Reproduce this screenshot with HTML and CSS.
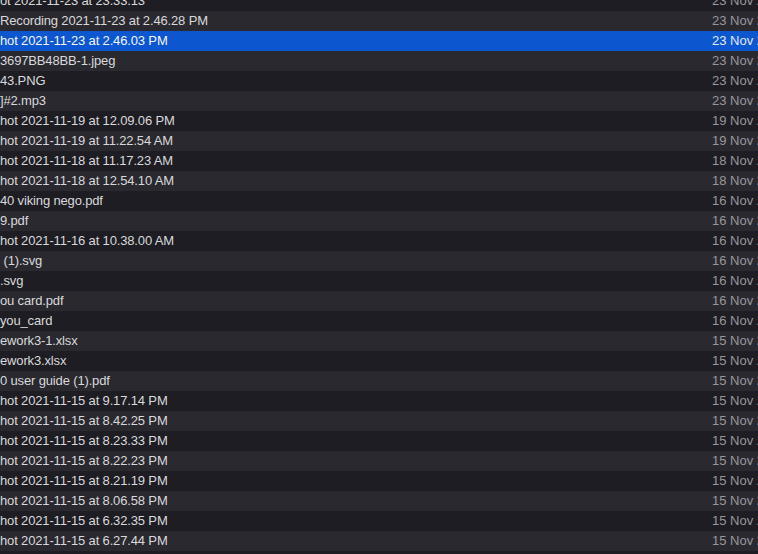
FILE: index.html
```html
<!DOCTYPE html>
<html>
<head>
<meta charset="utf-8">
<link rel="stylesheet" href="styles.css">
</head>
<body>
<div class="view">
  <ul class="list">
    <li class="row"><span class="name">ot 2021-11-23 at 23.33.13</span><span class="date">23 Nov 2021 at 23:33</span></li>
    <li class="row"><span class="name">Recording 2021-11-23 at 2.46.28 PM</span><span class="date">23 Nov 2021 at 14:46</span></li>
    <li class="row selected"><span class="name">hot 2021-11-23 at 2.46.03 PM</span><span class="date">23 Nov 2021 at 14:46</span></li>
    <li class="row"><span class="name">3697BB48BB-1.jpeg</span><span class="date">23 Nov 2021 at 14:20</span></li>
    <li class="row"><span class="name">43.PNG</span><span class="date">23 Nov 2021 at 13:12</span></li>
    <li class="row"><span class="name">]#2.mp3</span><span class="date">23 Nov 2021 at 10:05</span></li>
    <li class="row"><span class="name">hot 2021-11-19 at 12.09.06 PM</span><span class="date">19 Nov 2021 at 12:09</span></li>
    <li class="row"><span class="name">hot 2021-11-19 at 11.22.54 AM</span><span class="date">19 Nov 2021 at 11:22</span></li>
    <li class="row"><span class="name">hot 2021-11-18 at 11.17.23 AM</span><span class="date">18 Nov 2021 at 11:17</span></li>
    <li class="row"><span class="name">hot 2021-11-18 at 12.54.10 AM</span><span class="date">18 Nov 2021 at 00:54</span></li>
    <li class="row"><span class="name">40 viking nego.pdf</span><span class="date">16 Nov 2021 at 21:40</span></li>
    <li class="row"><span class="name">9.pdf</span><span class="date">16 Nov 2021 at 15:02</span></li>
    <li class="row"><span class="name">hot 2021-11-16 at 10.38.00 AM</span><span class="date">16 Nov 2021 at 10:38</span></li>
    <li class="row"><span class="name">&nbsp;(1).svg</span><span class="date">16 Nov 2021 at 10:12</span></li>
    <li class="row"><span class="name">.svg</span><span class="date">16 Nov 2021 at 10:11</span></li>
    <li class="row"><span class="name">ou card.pdf</span><span class="date">16 Nov 2021 at 09:50</span></li>
    <li class="row"><span class="name">you_card</span><span class="date">16 Nov 2021 at 09:48</span></li>
    <li class="row"><span class="name">ework3-1.xlsx</span><span class="date">15 Nov 2021 at 23:10</span></li>
    <li class="row"><span class="name">ework3.xlsx</span><span class="date">15 Nov 2021 at 23:02</span></li>
    <li class="row"><span class="name">0 user guide (1).pdf</span><span class="date">15 Nov 2021 at 22:30</span></li>
    <li class="row"><span class="name">hot 2021-11-15 at 9.17.14 PM</span><span class="date">15 Nov 2021 at 21:17</span></li>
    <li class="row"><span class="name">hot 2021-11-15 at 8.42.25 PM</span><span class="date">15 Nov 2021 at 20:42</span></li>
    <li class="row"><span class="name">hot 2021-11-15 at 8.23.33 PM</span><span class="date">15 Nov 2021 at 20:23</span></li>
    <li class="row"><span class="name">hot 2021-11-15 at 8.22.23 PM</span><span class="date">15 Nov 2021 at 20:22</span></li>
    <li class="row"><span class="name">hot 2021-11-15 at 8.21.19 PM</span><span class="date">15 Nov 2021 at 20:21</span></li>
    <li class="row"><span class="name">hot 2021-11-15 at 8.06.58 PM</span><span class="date">15 Nov 2021 at 20:06</span></li>
    <li class="row"><span class="name">hot 2021-11-15 at 6.32.35 PM</span><span class="date">15 Nov 2021 at 18:32</span></li>
    <li class="row"><span class="name">hot 2021-11-15 at 6.27.44 PM</span><span class="date">15 Nov 2021 at 18:27</span></li>
    <li class="row"><span class="name">hot 2021-11-15 at 6.20.02 PM</span><span class="date">15 Nov 2021 at 18:20</span></li>
  </ul>
</div>
</body>
</html>
```
FILE: styles.css
```css
html, body {
  margin: 0;
  padding: 0;
  background: #1e1d23;
}
.view {
  width: 758px;
  height: 554px;
  overflow: hidden;
}
.list {
  list-style: none;
  margin: -9px 0 0 0;
  padding: 0;
  font-family: "Liberation Sans", Arial, sans-serif;
  font-size: 13px;
}
.row {
  display: grid;
  grid-template-columns: 712px 1fr;
  height: 20px;
  line-height: 20px;
  white-space: nowrap;
  overflow: hidden;
  background: #1e1d23;
  color: #d9d9db;
}
.row:nth-child(even) {
  background: #2a292f;
}
.name {
  overflow: hidden;
  letter-spacing: -0.15px;
}
.date {
  color: #98979c;
  overflow: hidden;
}
.row.selected {
  background: #0c57cf;
  color: #f4f6fb;
}
.row.selected .date {
  color: #e3e9f6;
}
```
